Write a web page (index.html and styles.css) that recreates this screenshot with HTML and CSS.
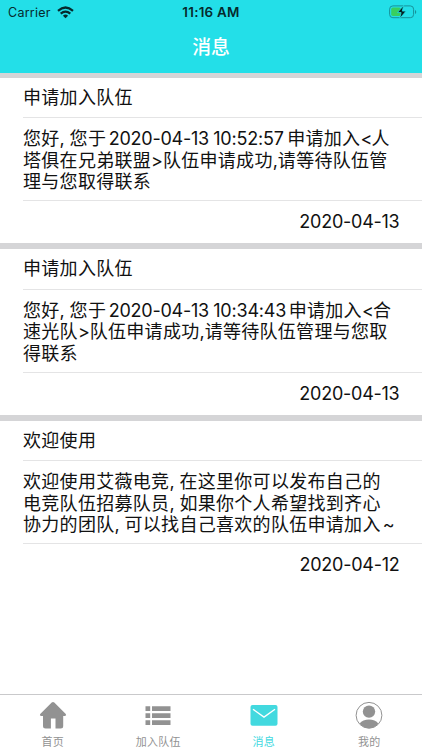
FILE: index.html
```
<!DOCTYPE html>
<html lang="zh-CN">
<head>
<meta charset="utf-8">
<title>消息</title>
<link rel="stylesheet" href="styles.css">
</head>
<body>
<div class="app">
  <header class="header">
    <div class="status">
      <div class="carrier">Carrier
        <svg class="wifi" width="17" height="13" viewBox="0 0 17 13" fill="none" stroke="#062a2d" stroke-width="2.2"><path d="M1 4.800Q8.500-1.800 16 4.800M3.700 7.600Q8.500 3.500 13.300 7.600"/><path d="M5.900 9.700Q8.500 7.500 11.100 9.700L8.500 12.300Z" fill="#062a2d" stroke="none"/></svg>
      </div>
      <div class="clock">11:16 AM</div>
      <svg class="battery" width="28" height="14" viewBox="0 0 28 14"><rect x=".6" y=".9" width="24" height="11.800" rx="3.300" fill="none" stroke="#17929a" stroke-width="1"/><path d="M26 4.900v4c1.700-.6 1.700-3.400 0-4z" fill="#17929a"/><rect x="2.200" y="2.500" width="9.800" height="8.600" rx="1.800" fill="#38cf60"/><path d="M14.700.4 8.400 7.600h3.700l-1.500 6.100 6.500-7.600h-3.800z" fill="#041e20" stroke="#23dfe8" stroke-width=".8"/></svg>
    </div>
    <h1 class="title">消息</h1>
  </header>
  <main class="list">
    <article class="card">
      <h2 class="subject">申请加入队伍</h2>
      <div class="message">
        <p>您好<span class="comma">,</span>您于<span class="num date-in">2020-04-13</span><span class="num time-in">10:52:57</span>申请加入<span class="num">&lt;</span>人</p>
        <p>塔俱在兄弟联盟<span class="num">&gt;</span>队伍申请成功<span class="num">,</span>请等待队伍管</p>
        <p>理与您取得联系</p>
      </div>
      <time class="date">2020-04-13</time>
    </article>
    <article class="card">
      <h2 class="subject">申请加入队伍</h2>
      <div class="message">
        <p>您好<span class="comma">,</span>您于<span class="num date-in">2020-04-13</span><span class="num time-in wide">10:34:43</span>申请加入<span class="num">&lt;</span>合</p>
        <p>速光队<span class="num">&gt;</span>队伍申请成功<span class="num">,</span>请等待队伍管理与您取</p>
        <p>得联系</p>
      </div>
      <time class="date">2020-04-13</time>
    </article>
    <article class="card">
      <h2 class="subject">欢迎使用</h2>
      <div class="message">
        <p>欢迎使用艾薇电竞<span class="comma">,</span>在这里你可以发布自己的</p>
        <p>电竞队伍招募队员<span class="comma">,</span>如果你个人希望找到齐心</p>
        <p>协力的团队<span class="comma">,</span>可以找自己喜欢的队伍申请加入<span class="num tilde">~</span></p>
      </div>
      <time class="date">2020-04-12</time>
    </article>
  </main>
  <nav class="tabs">
    <a class="tab">
      <svg width="28" height="28" viewBox="0 0 28 28" fill="#929292"><path d="M12.700 1.500q1.300-1 2.600 0L26.800 13q1 1.700-.8 2h-1.800v10q0 2.500-2.500 2.500h-5.200v-9.900h-4.600v9.900H6.600q-2.600 0-2.600-2.500V15H2q-1.800-.3-.8-2z"/></svg>
      <span>首页</span>
    </a>
    <a class="tab">
      <svg width="28" height="28" viewBox="0 0 28 28" fill="#929292"><path d="M1.500 5.200h4.700v4.700H1.500zM8 5.200h18.500v4.700H8zM1.500 12.200h4.700v4.700H1.500zM8 12.200h18.500v4.700H8zM1.500 19.200h4.700v4.700H1.500zM8 19.200h18.500v4.700H8z"/></svg>
      <span>加入队伍</span>
    </a>
    <a class="tab active">
      <svg width="28" height="28" viewBox="0 0 28 28"><rect x=".5" y="4" width="27" height="20.800" rx="2" fill="#42d9df"/><path d="m3 8.300 11 7.800 11-7.800" fill="none" stroke="#fff" stroke-width="1.400"/></svg>
      <span>消息</span>
    </a>
    <a class="tab">
      <svg width="28" height="28" viewBox="0 0 28 28" fill="#929292"><circle cx="14" cy="14.300" r="12.900" fill="none" stroke="#929292" stroke-width="1"/><circle cx="14" cy="10.600" r="6.200"/><path d="M4.700 22.500C8 17 20 17 23.300 22.500 19 28.900 9 28.900 4.700 22.500z"/></svg>
      <span>我的</span>
    </a>
  </nav>
</div>
</body>
</html>
```
FILE: styles.css
```
* { box-sizing: border-box; margin: 0; padding: 0; }
body {
  background: #fff;
  color: #111;
  font-family: Inter, "Noto Sans CJK SC", sans-serif;
}
.app {
  width: 422px;
  height: 750px;
  display: flex;
  flex-direction: column;
  overflow: hidden;
}
.header { height: 72.6px; background: #23dfe8; flex: none; }
.status {
  height: 24px;
  display: grid;
  grid-template-columns: 1fr auto 1fr;
  align-items: center;
  padding: 0 8px;
  color: #062a2d;
}
.carrier { display: flex; align-items: center; gap: 6px; font-size: 12.5px; letter-spacing: .25px; }
.clock { font-size: 13.4px; font-weight: 600; letter-spacing: .25px; }
.battery { justify-self: end; margin-right: -3px; }
.title {
  height: 48px;
  line-height: 48px;
  text-align: center;
  color: #fff;
  font-size: 18.8px;
  font-weight: 500;
}
.list { flex: 1; }
.card { height: 171.2px; border-top: 6px solid #d5d5d7; }
.card:first-child { height: 170.8px; border-top-width: 5px; }
.subject {
  height: 40.8px;
  margin-left: 23px;
  border-bottom: 1px solid #e4e4e5;
  font-size: 18px;
  font-weight: 400;
  letter-spacing: .3px;
  line-height: 40.6px;
}
.message {
  height: 83px;
  margin-left: 23px;
  padding-top: 10px;
  border-bottom: 1px solid #e4e4e5;
  font-size: 18px;
  letter-spacing: .3px;
  line-height: 21.3px;
  white-space: nowrap;
}
.message p { height: 21.3px; }
.num { letter-spacing: -.1px; }
.comma { display: inline-block; width: 10px; }
.date-in { display: inline-block; width: 104.500px; margin-left: 2.5px; letter-spacing: -.25px; }
.time-in { display: inline-block; width: 74px; letter-spacing: -.2px; }
.time-in.wide { width: 75.500px; }
.message p:first-child .time-in + .num { letter-spacing: -.8px; }
.tilde { margin-left: 2px; }
.date {
  display: block;
  padding-right: 22.5px;
  line-height: 41px;
  text-align: right;
  font-size: 18px;
  letter-spacing: -.25px;
}
.tabs {
  height: 56px;
  flex: none;
  display: grid;
  grid-template-columns: repeat(4, 1fr);
  border-top: 1px solid #c9c9cb;
  background: #fff;
}
.tab {
  display: flex;
  flex-direction: column;
  align-items: center;
  padding-top: 6px;
  color: #929292;
  font-size: 11px;
  line-height: 16px;
  letter-spacing: .2px;
}
.tab span { margin-top: 4.5px; }
.tab svg { display: block; }
.tab.active { color: #42d9df; }
```
